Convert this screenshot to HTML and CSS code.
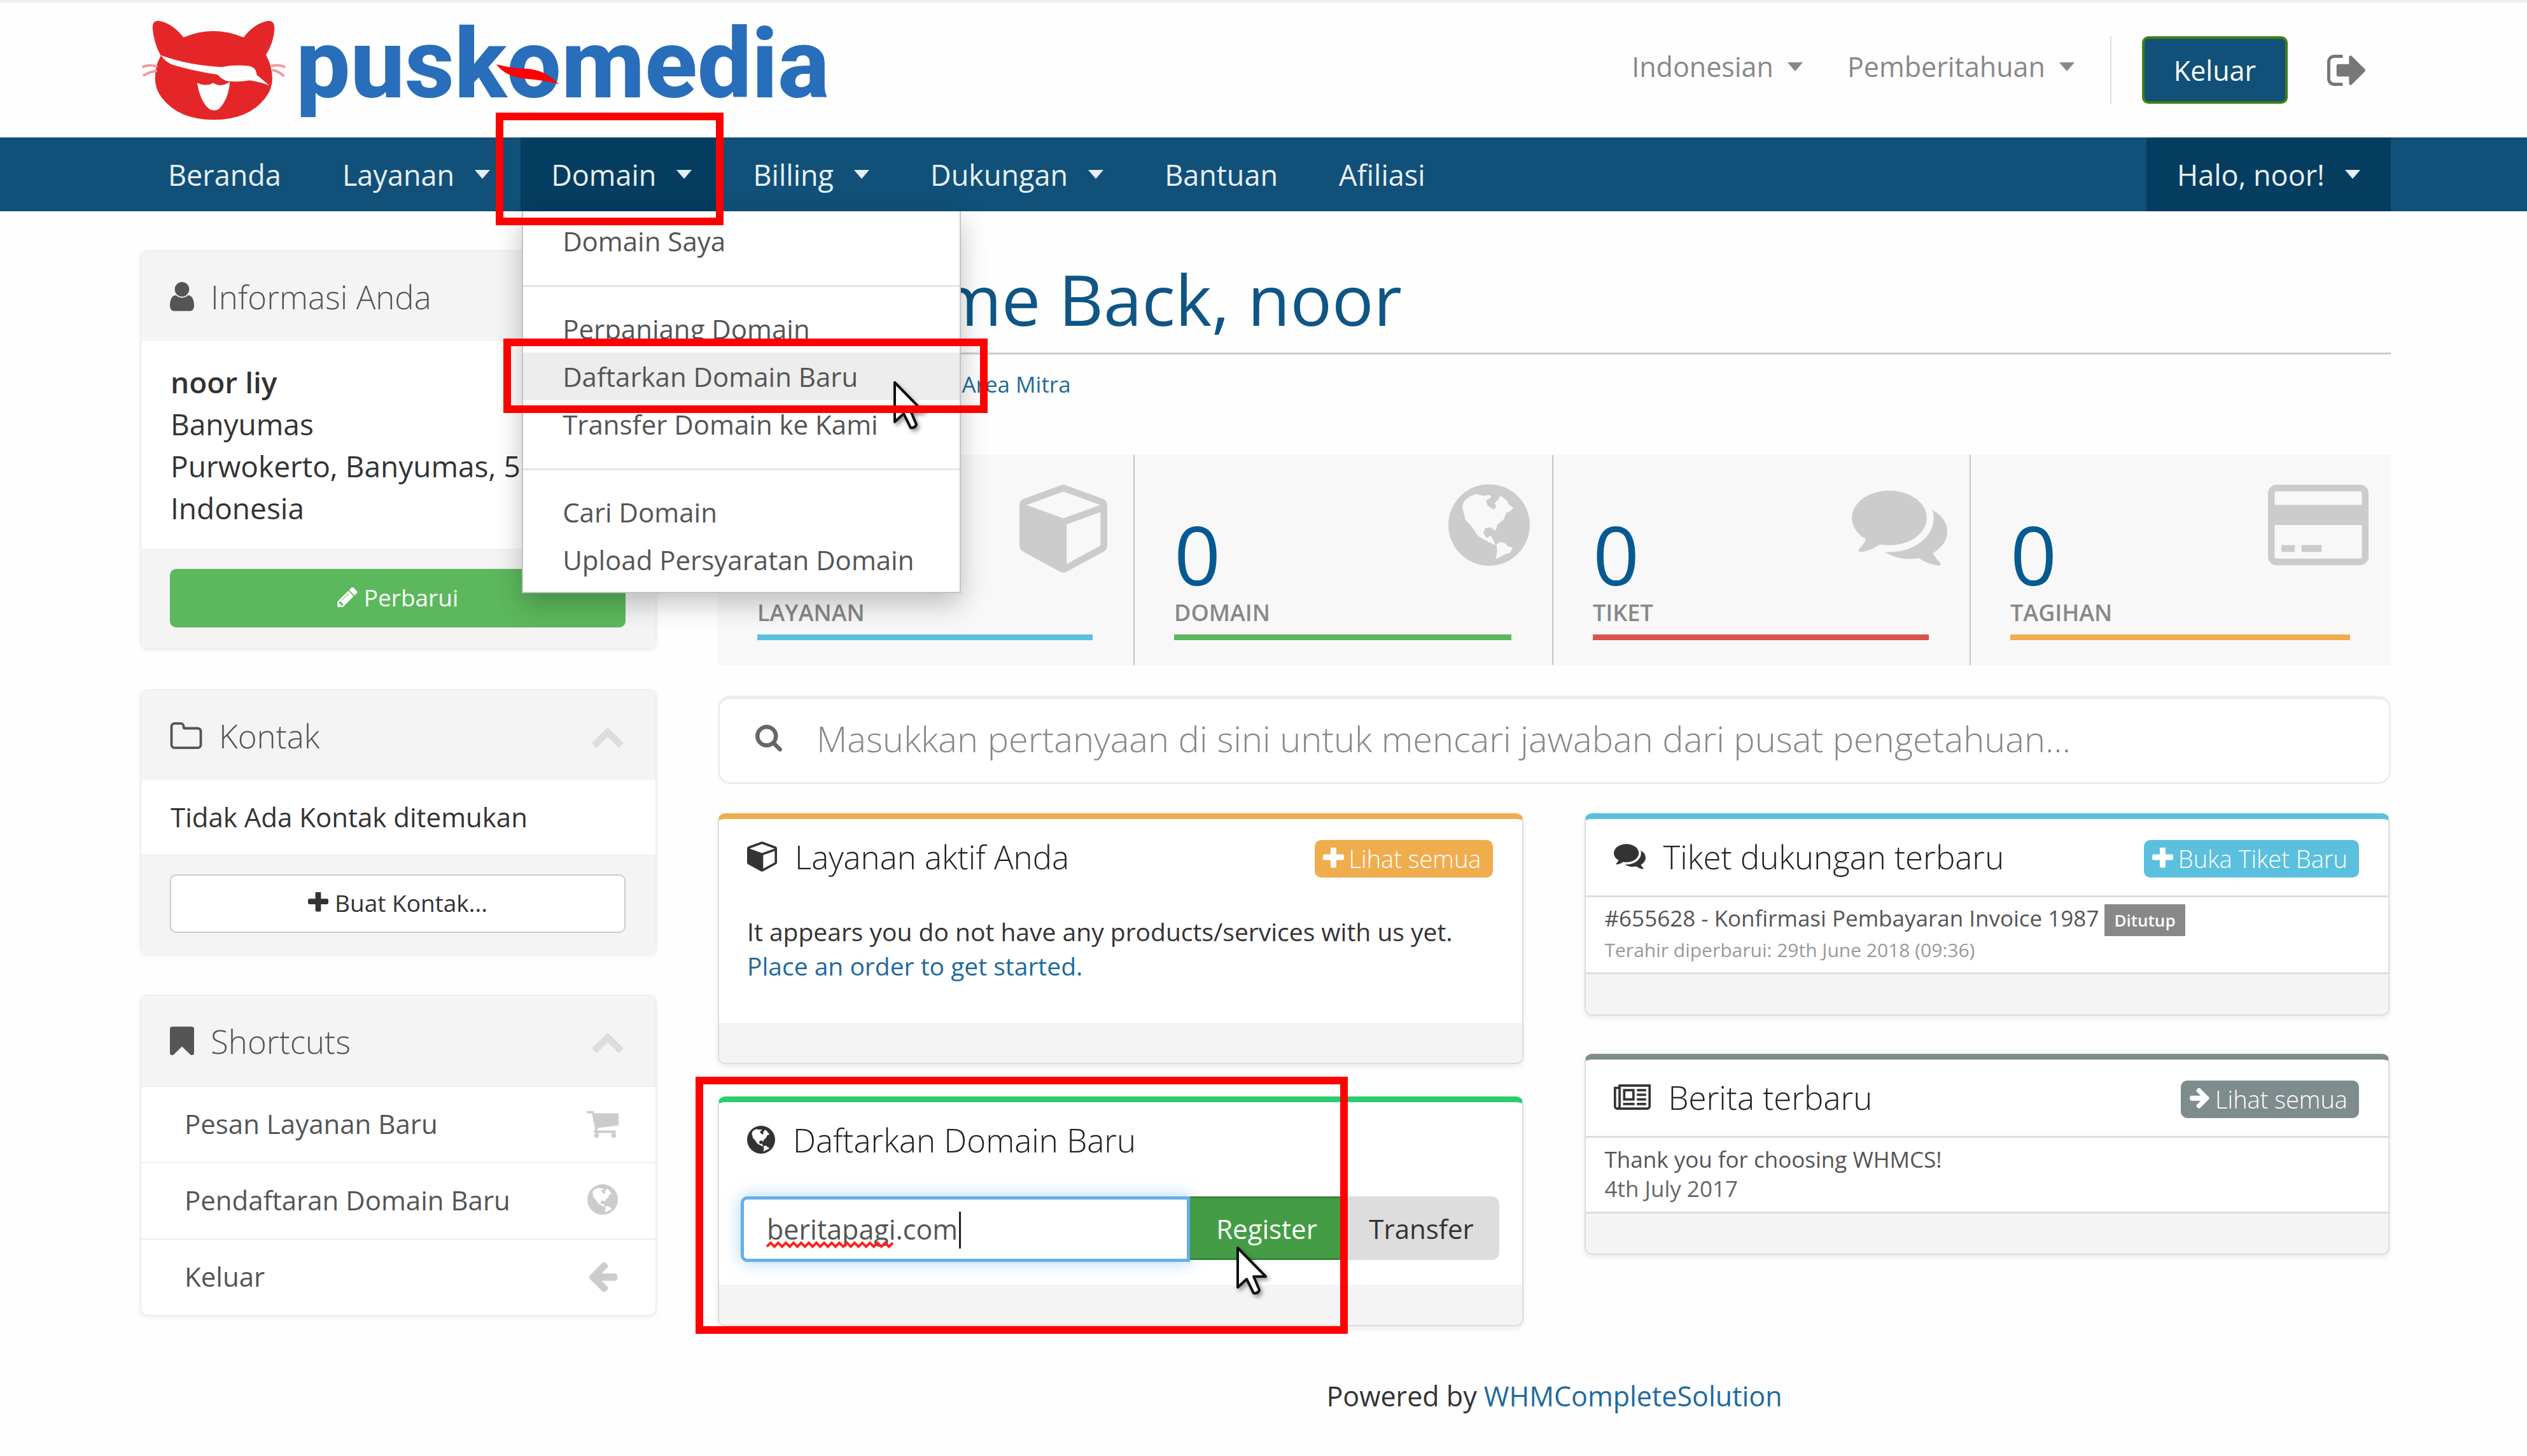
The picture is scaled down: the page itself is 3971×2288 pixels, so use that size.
FILE: index.html
```html
<!DOCTYPE html>
<html lang="id">
<head>
<meta charset="utf-8">
<meta name="viewport" content="width=device-width, initial-scale=1">
<title>Area Klien - Puskomedia</title>
<link rel="stylesheet" href="styles.css">
</head>
<body>
<svg class="sprite" aria-hidden="true">
  <symbol id="i-user" viewBox="256 0 1280 1792"><path d="M1536 1399q0 109-62.500 187t-150.500 78h-854q-88 0-150.500-78t-62.500-187q0-85 8.500-160.500t31.500-152 58.500-131 94-89 134.500-34.500q131 128 313 128t313-128q76 0 134.500 34.500t94 89 58.500 131 31.500 152 8.500 160.500zm-256-887q0 159-112.500 271.500t-271.500 112.500-271.500-112.500-112.500-271.500 112.500-271.500 271.500-112.500 271.500 112.500 112.500 271.500z"/></symbol>
  <symbol id="i-plus" viewBox="192 192 1408 1408"><path d="M1600 736v192q0 40-28 68t-68 28h-416v416q0 40-28 68t-68 28h-192q-40 0-68-28t-28-68v-416h-416q-40 0-68-28t-28-68v-192q0-40 28-68t68-28h416v-416q0-40 28-68t68-28h192q40 0 68 28t28 68v416h416q40 0 68 28t28 68z"/></symbol>
  <symbol id="i-bookmark" viewBox="256 0 1280 1792"><path d="M1420 128q23 0 44 9 33 13 52.500 41t19.500 62v1289q0 34-19.500 62t-52.500 41q-19 8-44 8-48 0-83-32l-441-424-441 424q-36 33-83 33-23 0-44-9-33-13-52.500-41t-19.500-62v-1289q0-34 19.500-62t52.500-41q21-9 44-9h1048z"/></symbol>
  <symbol id="i-up" viewBox="0 0 1792 1792"><path d="M1683 1331l-166 165q-19 19-45 19t-45-19l-531-531-531 531q-19 19-45 19t-45-19l-166-165q-19-19-19-45.500t19-45.500l742-741q19-19 45-19t45 19l742 741q19 19 19 45.500t-19 45.500z"/></symbol>
  <symbol id="i-cart" viewBox="0 0 1792 1792"><path d="M704 1536q0 52-38 90t-90 38-90-38-38-90 38-90 90-38 90 38 38 90zm896 0q0 52-38 90t-90 38-90-38-38-90 38-90 90-38 90 38 38 90zm128-1088v512q0 24-16.500 42.500t-40.500 21.500l-1044 122q13 60 13 70 0 16-24 64h920q26 0 45 19t19 45-19 45-45 19h-1024q-26 0-45-19t-19-45q0-11 8-31.500t16-36 21.500-40 15.500-29.500l-177-823h-204q-26 0-45-19t-19-45 19-45 45-19h256q16 0 28.500 6.500t19.500 15.500 13 24.500 8 26 5.500 29.500 4.500 26h1201q26 0 45 19t19 45z"/></symbol>
  <symbol id="i-left" viewBox="0 0 1792 1792"><path d="M1664 896v128q0 53-32.500 90.500t-84.500 37.500h-704l293 294q38 36 38 90t-38 90l-75 76q-37 37-90 37-52 0-91-37l-651-652q-37-37-37-90 0-52 37-91l651-650q38-38 91-38 52 0 90 38l75 74q38 38 38 91t-38 91l-293 293h704q52 0 84.500 37.500t32.500 90.500z"/></symbol>
  <symbol id="i-right" viewBox="64 200 1600 1600"><path d="M1600 960q0 54-37 91l-651 651q-39 37-91 37-51 0-90-37l-75-75q-38-38-38-91t38-91l293-293h-704q-52 0-84.500-37.500t-32.500-90.500v-128q0-53 32.500-90.500t84.500-37.500h704l-293-294q-38-36-38-90t38-90l75-75q38-38 90-38 53 0 91 38l651 651q37 35 37 90z"/></symbol>
  <symbol id="i-search" viewBox="64 128 1664 1664"><path d="M1216 832q0-185-131.500-316.500t-316.500-131.500-316.500 131.500-131.500 316.500 131.500 316.500 316.500 131.500 316.500-131.500 131.500-316.500zm512 832q0 52-38 90t-90 38q-54 0-90-38l-343-342q-179 124-399 124-143 0-273.500-55.500t-225-150-150-225-55.500-273.500 55.500-273.500 150-225 225-150 273.500-55.500 273.500 55.500 225 150 150 225 55.500 273.500q0 220-124 399l343 343q37 37 37 90z"/></symbol>
  <symbol id="i-folder" viewBox="64 64 1664 1536"><path d="M1600 1312v-704q0-40-28-68t-68-28h-704q-40 0-68-28t-28-68v-64q0-40-28-68t-68-28h-320q-40 0-68 28t-28 68v960q0 40 28 68t68 28h1216q40 0 68-28t28-68zm128-704v704q0 92-66 158t-158 66h-1216q-92 0-158-66t-66-158v-960q0-92 66-158t158-66h320q92 0 158 66t66 158v32h672q92 0 158 66t66 158z"/></symbol>
  <symbol id="i-cube" viewBox="0 120 1664 1672"><path d="M896 1629l640-349v-636l-640 233v752zm-64-865l698-254-698-254-698 254zm832-252v768q0 35-18 65t-49 47l-704 384q-28 16-61 16t-61-16l-704-384q-31-17-49-47t-18-65v-768q0-40 23-73t61-47l704-256q22-8 44-8t44 8l704 256q38 14 61 47t23 73z"/></symbol>
  <symbol id="i-comments" viewBox="0 256 1792 1408"><path d="M1408 768q0 139-94 257t-256.500 186.500-353.500 68.500q-86 0-176-16-124 88-278 128-36 9-86 16h-3q-11 0-20.500-8t-11.500-21q-1-3-1-6.500t.5-6.500 2-6l2.500-5 3.500-5.500 4-5 4.500-5 4-4.500q5-6 23-25t26-29.500 22.500-29 25-38.500 20.500-44q-124-72-195-177t-71-224q0-139 94-257t256.500-186.500 353.500-68.500 353.500 68.500 256.500 186.500 94 257zm384 256q0 120-71 224.500t-195 176.500q10 24 20.500 44t25 38.500 22.500 29 26 29.500 23 25q1 1 4 4.500t4.500 5 4 5 3.500 5.500l2.500 5 2 6 .5 6.500-1 6.500q-3 14-13 22t-22 7q-50-7-86-16-154-40-278-128-90 16-176 16-271 0-472-132 58 4 88 4 161 0 309-45t264-129q125-92 192-212t67-254q0-77-23-152 129 71 204 178t75 230z"/></symbol>
  <symbol id="i-globe" viewBox="0 0 100 100"><path fill-rule="evenodd" d="M50 0a50 50 0 1 1 0 100a50 50 0 1 1 0-100zM17 28L19 21L26 15L35 12L42 14L51 13L53 16L46 20L48 26L55 31L59 28L57 23L61 19L64 14L72 20L74 25L80 29L76 33L71 35L68 43L60 50L58 57L52 53L45 54L43 60L47 66L52 63L55 68L58 75L50 71L42 67L36 63L28 51L21 44L19 36zM59 74L63 71L69 72L73 76L79 78L76 84L70 86L58 92L60 81z"/></symbol>
  <symbol id="i-pencil" viewBox="128 100 1536 1564"><path d="M491 1536l91-91-235-235-91 91v107h128v128h107zm523-928q0-22-22-22-10 0-17 7l-542 542q-7 7-7 17 0 22 22 22 10 0 17-7l542-542q7-7 7-17zm-54-192l416 416-832 832h-416v-416zm683 96q0 53-37 90l-166 166-416-416 166-165q36-38 90-38 53 0 91 38l235 234q37 39 37 91z"/></symbol>
  <symbol id="i-signout" viewBox="64 256 1568 1280"><path d="M704 1440q0 4 1 20t.5 26.500-3 23.500-10 19.500-20.500 6.500h-320q-119 0-203.500-84.500t-84.500-203.500v-704q0-119 84.500-203.500t203.500-84.500h320q13 0 22.500 9.500t9.500 22.500q0 4 1 20t.5 26.500-3 23.500-10 19.500-20.500 6.500h-320q-66 0-113 47t-47 113v704q0 66 47 113t113 47h312l11.500 1 11.500 3 8 5.500 7 9 2 13.500zm928-544q0 26-19 45l-544 544q-19 19-45 19t-45-19-19-45v-288h-448q-26 0-45-19t-19-45v-384q0-26 19-45t45-19h448v-288q0-26 19-45t45-19 45 19l544 544q19 19 19 45z"/></symbol>
  <symbol id="i-news" viewBox="0 0 2048 1408"><path d="M1024 384h-384v384h384v-384zm128 640v128h-640v-128h640zm0-768v640h-640v-640h640zm640 768v128h-512v-128h512zm0-256v128h-512v-128h512zm0-256v128h-512v-128h512zm0-256v128h-512v-128h512zm-1536 960v-960h-128v960q0 26 19 45t45 19 45-19 19-45zm1664 0v-1088h-1536v1088q0 33-11 64h1483q26 0 45-19t19-45zm128-1216v1216q0 80-56 136t-136 56h-1664q-80 0-136-56t-56-136v-1088h256v-128h1792z"/></symbol>
  <symbol id="i-card" viewBox="0 0 1920 1536"><path fill-rule="evenodd" d="M1760 0q66 0 113 47t47 113v1216q0 66-47 113t-113 47h-1600q-66 0-113-47t-47-113v-1216q0-66 47-113t113-47zM160 128q-13 0-22.500 9.500t-9.500 22.500v224h1664v-224q0-13-9.500-22.500t-22.500-9.500zM1760 1408q13 0 22.500-9.500t9.500-22.500v-608h-1664v608q0 13 9.500 22.500t22.500 9.500zM256 1280v-128h256v128zM640 1280v-128h384v128z"/></symbol>
  <symbol id="i-cursor" viewBox="0 0 48 78"><path d="M2 4V66L16 53L27 75Q34 76 36 70L27 49H46z" fill="#fff" stroke="#111" stroke-width="4" stroke-linejoin="round"/></symbol>
</svg>

<header class="top">
  <a class="logo" href="#" aria-label="puskomedia">
    <svg class="logo-cat" viewBox="35 28 680 470" aria-hidden="true">
      <path fill="#e52628" d="M88 60Q88 28 116 30Q180 40 234 108Q374 48 516 108Q570 40 632 30Q662 28 662 66Q660 130 622 190Q650 240 652 300Q652 350 620 392Q540 496 376 496Q210 496 130 390Q100 350 100 300Q100 240 127 195Q92 130 88 60z"/>
      <path fill="#fff" d="M128 192Q260 240 415 247Q470 236 540 242Q578 250 578 284L638 334Q590 316 546 310Q490 320 440 314Q410 304 396 284Q270 264 180 236Q146 222 128 192zM298 322Q340 342 374 322Q410 346 452 318Q446 400 400 446Q378 458 356 446Q312 410 298 322z"/>
      <path fill="none" stroke="#f19a9b" stroke-width="12" stroke-linecap="round" d="M44 246Q76 234 106 244M48 286Q76 270 104 266M650 242Q680 234 708 246M654 262Q680 266 704 288"/>
    </svg>
    <span class="logo-text">puskomedia</span>
    <svg class="logo-slash" viewBox="0 0 98 32" aria-hidden="true"><path fill="#f00" d="M0 0Q22 6 46 7Q76 8 98 31Q74 25 48 23Q14 20 0 0z"/></svg>
  </a>
  <div class="top-menu">
    <button class="top-link" type="button">Indonesian <i class="caret"></i></button>
    <button class="top-link" type="button">Pemberitahuan <i class="caret"></i></button>
    <div class="top-session">
      <button class="logout" type="button">Keluar</button>
      <a class="signout" href="#" aria-label="Keluar"><svg><use href="#i-signout"/></svg></a>
    </div>
  </div>
</header>

<nav class="nav">
  <ul class="nav-list">
    <li><a href="#">Beranda</a></li>
    <li><a href="#">Layanan <i class="caret"></i></a></li>
    <li class="open"><a href="#">Domain <i class="caret"></i></a>
      <ul class="dropdown">
        <li><a href="#">Domain Saya</a></li>
        <li class="divider"></li>
        <li><a href="#">Perpanjang Domain</a></li>
        <li class="hover"><a href="#">Daftarkan Domain Baru</a>
          <svg class="cursor cursor-menu" aria-hidden="true"><use href="#i-cursor"/></svg>
          <span class="mark mark-item"></span></li>
        <li><a href="#">Transfer Domain ke Kami</a></li>
        <li class="divider"></li>
        <li><a href="#">Cari Domain</a></li>
        <li><a href="#">Upload Persyaratan Domain</a></li>
      </ul>
      <span class="mark mark-nav"></span>
    </li>
    <li><a href="#">Billing <i class="caret"></i></a></li>
    <li><a href="#">Dukungan <i class="caret"></i></a></li>
    <li><a href="#">Bantuan</a></li>
    <li><a href="#">Afiliasi</a></li>
    <li class="open account"><a href="#">Halo, noor! <i class="caret"></i></a></li>
  </ul>
</nav>

<div class="page">
  <aside class="side">
    <section class="card">
      <h3 class="card-head"><svg class="ic-user"><use href="#i-user"/></svg>Informasi Anda</h3>
      <address class="card-body"><strong>noor liy</strong><br>Banyumas<br>Purwokerto, Banyumas, 5<br>Indonesia</address>
      <div class="card-foot"><button class="btn btn-green" type="button"><svg><use href="#i-pencil"/></svg>Perbarui</button></div>
    </section>
    <section class="card">
      <h3 class="card-head"><svg class="ic-folder"><use href="#i-folder"/></svg>Kontak<svg class="fold"><use href="#i-up"/></svg></h3>
      <p class="card-note">Tidak Ada Kontak ditemukan</p>
      <div class="card-foot"><button class="btn btn-plain" type="button"><svg><use href="#i-plus"/></svg>Buat Kontak...</button></div>
    </section>
    <section class="card">
      <h3 class="card-head"><svg class="ic-user"><use href="#i-bookmark"/></svg>Shortcuts<svg class="fold"><use href="#i-up"/></svg></h3>
      <a class="row" href="#">Pesan Layanan Baru<svg><use href="#i-cart"/></svg></a>
      <a class="row" href="#">Pendaftaran Domain Baru<svg class="ic-globe"><use href="#i-globe"/></svg></a>
      <a class="row" href="#">Keluar<svg><use href="#i-left"/></svg></a>
    </section>
  </aside>

  <main class="main">
    <h1>Welcome Back, noor</h1>
    <div class="crumbs"><a href="#">Beranda Portal</a><span>/</span><a href="#">Area Mitra</a></div>

    <div class="stats">
      <a class="stat s-blue" href="#"><span class="stat-top"><b>0</b><svg class="st-cube"><use href="#i-cube"/></svg></span><span class="stat-name">LAYANAN</span></a>
      <a class="stat s-green" href="#"><span class="stat-top"><b>0</b><svg class="st-globe"><use href="#i-globe"/></svg></span><span class="stat-name">DOMAIN</span></a>
      <a class="stat s-red" href="#"><span class="stat-top"><b>0</b><svg class="st-talk"><use href="#i-comments"/></svg></span><span class="stat-name">TIKET</span></a>
      <a class="stat s-gold" href="#"><span class="stat-top"><b>0</b><svg class="st-card"><use href="#i-card"/></svg></span><span class="stat-name">TAGIHAN</span></a>
    </div>

    <label class="search"><svg><use href="#i-search"/></svg><input type="text" aria-label="Cari pusat pengetahuan" placeholder="Masukkan pertanyaan di sini untuk mencari jawaban dari pusat pengetahuan..."></label>

    <div class="panels">
      <div class="col">
        <section class="panel p-gold">
          <div class="panel-head"><svg class="ph-cube"><use href="#i-cube"/></svg><h3>Layanan aktif Anda</h3><button type="button"><svg><use href="#i-plus"/></svg>Lihat semua</button></div>
          <p class="panel-text">It appears you do not have any products/services with us yet. <a href="#">Place an order to get started.</a></p>
          <div class="panel-foot"></div>
        </section>
        <section class="panel p-green">
          <div class="panel-head"><svg class="ph-globe"><use href="#i-globe"/></svg><h3>Daftarkan Domain Baru</h3></div>
          <form class="reg">
            <div class="reg-field">
              <input type="text" aria-label="Nama domain" value="beritapagi.com" spellcheck="false">
              <svg class="squiggle" viewBox="0 0 200 10" aria-hidden="true"><path fill="none" stroke="#f22" stroke-width="4" d="M0 8L6 2L12 8L18 2L24 8L30 2L36 8L42 2L48 8L54 2L60 8L66 2L72 8L78 2L84 8L90 2L96 8L102 2L108 8L114 2L120 8L126 2L132 8L138 2L144 8L150 2L156 8L162 2L168 8L174 2L180 8L186 2L192 8L198 2"/></svg>
              <span class="text-caret"></span>
            </div>
            <button class="reg-go" type="button">Register<svg class="cursor cursor-go" aria-hidden="true"><use href="#i-cursor"/></svg></button>
            <button class="reg-alt" type="button">Transfer</button>
          </form>
          <div class="panel-foot"></div>
          <span class="mark mark-panel"></span>
        </section>
      </div>
      <div class="col">
        <section class="panel p-blue">
          <div class="panel-head"><svg class="ph-talk"><use href="#i-comments"/></svg><h3>Tiket dukungan terbaru</h3><button type="button"><svg><use href="#i-plus"/></svg>Buka Tiket Baru</button></div>
          <div class="item"><a href="#">#655628 - Konfirmasi Pembayaran Invoice 1987</a> <span class="tag">Ditutup</span><small>Terahir diperbarui: 29th June 2018 (09:36)</small></div>
          <div class="panel-foot"></div>
        </section>
        <section class="panel p-slate">
          <div class="panel-head"><svg class="ph-news"><use href="#i-news"/></svg><h3>Berita terbaru</h3><button type="button"><svg><use href="#i-right"/></svg>Lihat semua</button></div>
          <div class="item"><a href="#">Thank you for choosing WHMCS!</a><br>4th July 2017</div>
          <div class="panel-foot"></div>
        </section>
      </div>
    </div>
    <p class="powered">Powered by <a href="#">WHMCompleteSolution</a></p>
  </main>
</div>
</body>
</html>
```
FILE: styles.css
```css
* { box-sizing: border-box; }
body {
  margin: 0;
  background: #fefefe;
  color: #333;
  font-family: "Open Sans", "Noto Sans", sans-serif;
  font-size: 42px;
  border-top: 4px solid #efefef;
}
a { color: #1f6a9c; text-decoration: none; }
button, input { font: inherit; }
button { cursor: pointer; border: 0; background: none; padding: 0; }
svg { fill: currentColor; flex: none; display: block; overflow: visible; }
h1, h3, p, ul { margin: 0; padding: 0; font-weight: 400; }
ul { list-style: none; }
.sprite { position: absolute; width: 0; height: 0; }
.caret {
  display: inline-block;
  border: 12px solid transparent;
  border-top: 14px solid;
  border-bottom: 0;
}

/* header */
.top {
  display: flex;
  justify-content: space-between;
  align-items: center;
  height: 212px;
  padding: 0 214px 0 218px;
}
.logo { display: flex; align-items: center; gap: 16px; margin-left: 4px; position: relative; }
.logo-cat { width: 227px; height: 157px; }
.logo-text { font: 800 152px/152px Roboto, sans-serif; color: #286ebb; padding-bottom: 18px; }
.logo-slash { position: absolute; left: 558px; top: 76px; width: 98px; height: 32px; }
.top-menu { display: flex; align-items: center; }
.top-link { color: #888; font-size: 43px; line-height: 60px; display: flex; align-items: center; gap: 22px; margin-right: 70px; padding-bottom: 10px; }
.top-link:nth-child(2) { margin-right: 56px; }
.top-session { display: flex; align-items: center; gap: 62px; border-left: 2px solid #ddd; padding-left: 48px; }
.logout { height: 106px; padding: 0 46px; font-size: 43px; color: #fff; background: #115079; border: 4px solid #417f10; border-radius: 10px; }
.signout { color: #777; margin-right: 40px; }
.signout svg { width: 60px; height: 49px; }

/* navigation */
.nav { background: #115079; padding: 0 214px 0 216px; }
.nav-list { display: flex; }
.nav-list > li { position: relative; }
.nav-list > li > a { display: flex; align-items: center; gap: 32px; height: 116px; padding: 0 48px; font-size: 45px; color: #e8f0f5; }
.nav-list > .open > a { background: #053d60; }
.nav .account { margin-left: auto; }
.dropdown {
  position: absolute;
  z-index: 5;
  left: 2px;
  top: 100%;
  width: 690px;
  padding: 9px 0 13px;
  background: #fff;
  border: 2px solid #c4c4c4;
  border-top: 0;
  box-shadow: 0 16px 40px rgba(0, 0, 0, .24);
}
.dropdown li { position: relative; }
.dropdown a { display: block; padding: 0 62px; font-size: 42px; line-height: 75px; color: #555; white-space: nowrap; }
.dropdown .divider { height: 3px; margin: 32px 0 28px; background: #e4e4e4; }
.dropdown .hover { background: #ededed; }

/* red highlight frames and pointers */
.mark { position: absolute; border: 12px solid #f00; pointer-events: none; z-index: 6; }
.mark-nav { left: -39px; right: -2px; top: -39px; bottom: -22px; }
.mark-item { left: -31px; right: -44px; top: -22px; bottom: -20px; }
.mark-panel { left: -37px; right: 274px; top: -40px; bottom: -14px; }
.cursor { position: absolute; width: 48px; height: 78px; filter: drop-shadow(3px 4px 3px rgba(0, 0, 0, .4)); }
.cursor-menu { left: 582px; top: 43px; z-index: 6; }
.cursor-go { left: 73px; top: 74px; z-index: 6; }

/* page columns */
.page { display: grid; grid-template-columns: 812px minmax(0, 1fr); gap: 96px; padding: 61px 214px 0 220px; }
.side { display: flex; flex-direction: column; gap: 63px; }
.card { border: 2px solid #eee; border-radius: 12px; background: #fff; box-shadow: 0 3px 6px rgba(0, 0, 0, .06); }
.card-head { display: flex; align-items: center; height: 141px; padding: 0 48px 0 45px; background: #f4f4f4; font-size: 51px; font-weight: 300; color: #555; }
.card-head svg { color: #555; margin-right: 26px; }
.card-head .fold { width: 54px; height: 54px; margin: 0 0 0 auto; color: #ddd; }
.ic-user { width: 38px; height: 54px; }
.ic-folder { width: 51px; height: 46px; }
.card-body { padding: 31px 46px; font-style: normal; font-size: 46px; line-height: 66px; white-space: nowrap; }
.card-body strong { font-weight: 600; }
.card-note { padding: 0 46px; line-height: 116px; }
.card-foot { padding: 32px 47px 32px 45px; background: #f4f4f4; }
.btn { display: flex; align-items: center; justify-content: center; gap: 10px; width: 100%; height: 92px; padding-bottom: 4px; border-radius: 10px; font-size: 37px; }
.btn svg { width: 32px; height: 32px; }
.btn-green { background: #5cb85c; color: #fff; }
.btn-plain { background: #fff; border: 2px solid #ccc; color: #333; }
.row { display: flex; align-items: center; justify-content: space-between; height: 120px; padding: 0 56px 4px 68px; color: #555; border-top: 2px solid #eee; }
.row svg { width: 54px; height: 54px; color: #ccc; }
.row .ic-globe { width: 50px; height: 48px; margin-right: 2px; }

/* main column */
h1 { font-size: 109px; line-height: 148px; color: #0f5585; padding: 3px 0 10px 38px; border-bottom: 3px solid #ccc; }
.crumbs { display: flex; gap: 48px; padding-left: 30px; font-size: 35px; line-height: 94px; color: #999; }
.stats { display: grid; grid-template-columns: 653fr 658fr 656fr 662fr; margin-top: 64px; background: #f8f8f8; }
.stat { display: block; height: 330px; padding: 46px 35px 0 62px; color: #888; }
.stat + .stat { border-left: 2px solid #c4c4c4; }
.stat-top { display: flex; justify-content: space-between; height: 178px; }
.stat b { font-weight: 400; font-size: 128px; line-height: 128px; margin-top: 46px; color: #065a92; }
.stat svg { color: #ccc; }
.st-cube { width: 138px; height: 139px; margin-right: 6px; }
.st-globe { width: 128px; height: 128px; }
.st-talk { width: 150px; height: 118px; margin-top: 10px; }
.st-card { width: 158px; height: 128px; }
.stat-name { display: block; margin-right: 29px; padding-bottom: 10px; font-size: 36px; font-weight: 600; line-height: 48px; border-bottom: 9px solid; }
.s-blue .stat-name { border-color: #5bc0de; }
.s-green .stat-name { border-color: #5cb85c; }
.s-red .stat-name { border-color: #d9534f; }
.s-gold .stat-name { border-color: #f0ad4e; }

.search { display: flex; align-items: center; gap: 54px; height: 139px; margin-top: 48px; padding: 0 56px 8px; border: 3px solid #ededed; border-top-width: 6px; border-radius: 20px; background: #fff; color: #666; }
.search svg { width: 42px; height: 42px; }
.search input { flex: 1; min-width: 0; padding: 0; border: 0; outline: 0; background: none; font-size: 56px; font-weight: 300; }
.search input::placeholder { color: #888; opacity: 1; }

.panels { display: grid; grid-template-columns: 1fr 1fr; gap: 94px; margin-top: 46px; }
.col { display: flex; flex-direction: column; gap: 51px; padding-right: 2px; }
.col + .col { gap: 60px; }
.panel { position: relative; background: #fff; border: 2px solid #ddd; border-top: 9px solid; border-radius: 12px; box-shadow: 0 4px 8px rgba(0, 0, 0, .08); }
.p-gold { border-top-color: #f0ad4e; }
.p-green { border-top-color: #2ecc71; }
.p-blue { border-top-color: #5bc0de; }
.p-slate { border-top-color: #7f8c8d; }
.panel-head { display: flex; align-items: center; height: 120px; padding: 0 46px 3px 44px; }
.panel-head > svg { margin-right: 28px; }
.panel-head h3 { font-size: 51px; font-weight: 300; line-height: 70px; color: #222; }
.panel-head button { display: flex; align-items: center; gap: 8px; height: 59px; margin: 8px 0 0 auto; padding: 0 18px 2px 13px; border-radius: 10px; font-size: 38px; font-weight: 300; color: #fff; }
.panel-head button svg { width: 33px; height: 33px; }
.p-gold button { background: #f0ad4e; }
.p-blue button { background: #5bc0de; }
.p-slate button { background: #7f8c8d; }
.ph-cube { width: 47px; height: 48px; }
.ph-globe { width: 44px; height: 44px; }
.ph-talk { width: 50px; height: 40px; }
.ph-news { width: 58px; height: 40px; }
.panel-foot { height: 63px; background: #f4f4f4; border-radius: 0 0 10px 10px; }
.panel-text { padding: 30px 44px 62px; font-size: 39px; line-height: 54px; }
.reg { display: flex; padding: 28px 36px 36px 34px; }
.reg-field { position: relative; flex: 1; min-width: 0; }
.reg-field input { display: block; width: 100%; height: 103px; padding: 0 36px; border: 5px solid #66afe9; border-radius: 10px 0 0 10px; outline: 0; font-size: 43px; color: #555; box-shadow: 0 0 26px rgba(102, 175, 233, .55); }
.squiggle { position: absolute; left: 41px; bottom: 22px; width: 200px; height: 10px; }
.text-caret { position: absolute; left: 343px; top: 24px; width: 3px; height: 58px; background: #222; }
.reg button { position: relative; height: 100px; font-size: 42px; }
.reg-go { width: 242px; background: #449d44; color: #fff; border: solid #398439; border-width: 3px 0; }
.reg-alt { width: 244px; background: #ddd; color: #333; border-radius: 0 12px 12px 0; }
.item { padding: 11px 30px 13px; border: solid #ddd; border-width: 3px 0; font-size: 35px; line-height: 46px; color: #666; }
.item a { color: #555; }
.item small { display: block; font-size: 30px; line-height: 44px; color: #999; }
.p-blue .item { padding-top: 10px; }
.tag { display: inline-block; padding: 0 15px; background: #888; color: #fff; font-size: 26px; font-weight: 600; line-height: 50px; }
.powered { padding: 80px 0 48px; text-align: center; font-size: 43px; line-height: 60px; }
```
